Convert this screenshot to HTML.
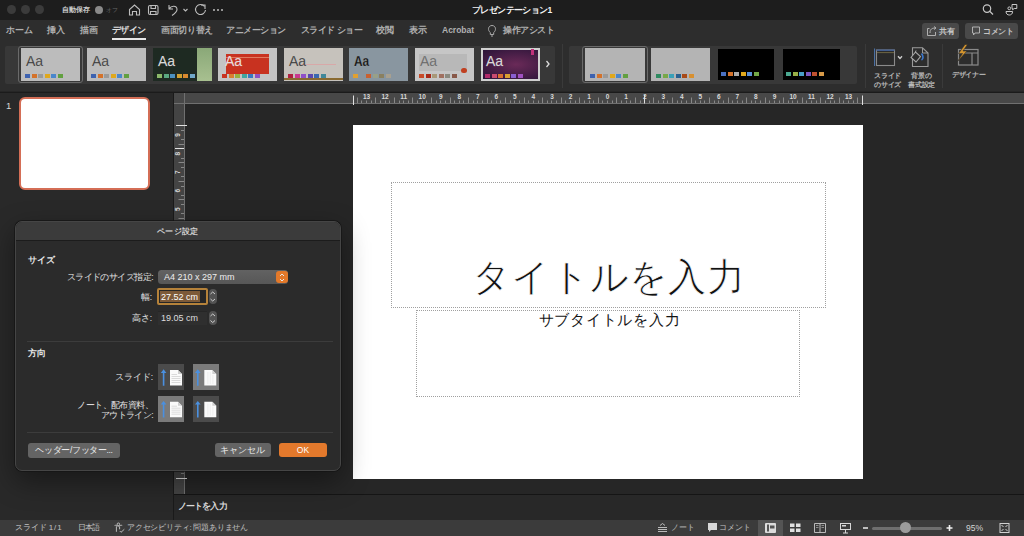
<!DOCTYPE html>
<html><head><meta charset="utf-8">
<style>
*{box-sizing:border-box;margin:0;padding:0}
html,body{width:1024px;height:536px;overflow:hidden;background:#262626;font-family:"Liberation Sans",sans-serif;color:#ddd}
.a{position:absolute}
.t{position:absolute;white-space:nowrap;line-height:1}
svg{position:absolute;overflow:visible}
.light{width:9px;height:9px;border-radius:50%;background:#3b3b3b;top:5px}
.tab{top:26.4px;font-size:8.5px;color:#b0b0b0;font-weight:bold}
.th{top:48px;width:59px;height:33px;overflow:hidden}
.bars{position:absolute;left:4px;top:26px;height:4px;display:flex}
.bars i{display:block;width:5px;height:4px;margin-right:1.5px}
.aa{position:absolute;left:5px;top:6px;font-size:14px;line-height:1;color:#3a3a3a;-webkit-text-stroke:0.25px rgba(190,190,190,.6)}
.rl{font-size:7.5px;color:#cfcfcf}
.dlab{font-size:8.5px;color:#e2e2e2;text-align:right}
.btn{position:absolute;border-radius:3px;background:#666;color:#eee;font-size:8.5px;text-align:center;line-height:14px}
.ori{position:absolute;width:26px;height:26px}
.st{top:524px;font-size:8px;color:#c2c2c2}
</style></head><body>
<!-- title bar -->
<div class="a" style="left:0;top:0;width:1024px;height:20px;background:#1d1d1d"></div>
<div class="a light" style="left:7px"></div>
<div class="a light" style="left:21px"></div>
<div class="a light" style="left:35px"></div>
<div class="t" style="left:62px;top:6px;font-size:7px;color:#cfcfcf;font-weight:bold">自動保存</div>
<div class="a" style="left:95px;top:6px;width:8px;height:8px;border-radius:50%;background:#8a8a8a"></div>
<div class="t" style="left:106px;top:7px;font-size:6px;color:#666">オフ</div>
<svg style="left:0;top:0" width="1024" height="20">
 <g fill="none" stroke="#bdbdbd" stroke-width="1.1">
  <path d="M129.5 15 V9.5 L134.5 5 L139.5 9.5 V15 H136.5 V11.5 H132.5 V15 Z"/>
  <rect x="148.5" y="5.5" width="9.5" height="9" rx="1.5"/>
  <path d="M151 5.5 V8.5 H155.5 V5.5 M150.5 14.5 V11.5 H156 V14.5"/>
  <path d="M169 5 V9 H173 M169.5 8.5 C171 5.5 177 5 177 9.5 C177 12 175 13.5 172 15.5"/>
  <path d="M183.5 9 L185.5 11 L187.5 9"/>
  <path d="M204.5 6.5 A5 5 0 1 0 205.5 10"/>
  <path d="M201 5 H205 V9"/>
 </g>
 <g fill="#bdbdbd"><circle cx="214" cy="10" r="1"/><circle cx="218" cy="10" r="1"/><circle cx="222" cy="10" r="1"/></g>
 <g fill="none" stroke="#c8c8c8" stroke-width="1.2">
  <circle cx="987" cy="8.6" r="3.7"/><path d="M989.7 11.3 L993 14.5"/>
 </g>
 <g fill="none" stroke="#c8c8c8" stroke-width="1">
  <circle cx="1009.3" cy="8.3" r="1.4"/><path d="M1006 11.5 H1012.6 C1012.6 14 1011 15 1009.3 15 C1007.6 15 1006 14 1006 11.5 Z"/>
  <path d="M1012 4.5 H1016.8 V8.5 H1014.2 L1012.6 9.8 V8.5 H1012 Z"/>
 </g>
</svg>
<div class="t" style="left:472px;top:5.5px;font-size:8.5px;color:#f4f4f4;font-weight:bold;letter-spacing:-0.6px">プレゼンテーション1</div>

<!-- tab bar -->
<div class="a" style="left:0;top:20px;width:1024px;height:23px;background:#2d2d2d"></div>
<div class="t tab" style="left:6px;letter-spacing:-0.2px">ホーム</div>
<div class="t tab" style="left:47px">挿入</div>
<div class="t tab" style="left:80px">描画</div>
<div class="t tab" style="left:112px;color:#e0e0e0;letter-spacing:-0.7px">デザイン</div>
<div class="a" style="left:112px;top:38px;width:34px;height:2px;background:#e8e8e8"></div>
<div class="t tab" style="left:161px;letter-spacing:-0.35px">画面切り替え</div>
<div class="t tab" style="left:226px;letter-spacing:-0.5px">アニメーション</div>
<div class="t tab" style="left:301px;letter-spacing:-0.55px">スライド ショー</div>
<div class="t tab" style="left:376px">校閲</div>
<div class="t tab" style="left:409px">表示</div>
<div class="t tab" style="left:442px">Acrobat</div>
<svg style="left:0;top:20px" width="600" height="23"><g fill="none" stroke="#aaa" stroke-width="1"><path d="M490.3 12.5 C487.5 10.5 488 5.5 492 5.5 C496 5.5 496.5 10.5 493.7 12.5 V14.5 H490.3 Z"/><path d="M491 16 H493"/></g></svg>
<div class="t tab" style="left:503px;letter-spacing:-0.45px">操作アシスト</div>
<div class="btn" style="left:922px;top:23px;width:37px;height:16px;background:#494949;line-height:16px;font-size:8.3px;font-weight:bold;color:#c4c4c4;text-align:left;padding-left:17px">共有</div>
<div class="btn" style="left:965px;top:23px;width:53px;height:16px;background:#494949;line-height:16px;font-size:8.3px;font-weight:bold;color:#c4c4c4;text-align:left;padding-left:18px;letter-spacing:-0.4px">コメント</div>
<svg style="left:0;top:0" width="1024" height="43"><g fill="none" stroke="#bbb" stroke-width="0.9">
 <path d="M929.5 28.5 H927.5 V35.5 H935.5 V32"/><path d="M930 33 C930 29 932 28 935.5 28 M934 26.5 L936 28 L934 29.5"/>
 <path d="M972.5 27 H979.5 V33 H975 L973.5 35 V33 H972.5 Z"/>
</g></svg>

<!-- ribbon -->
<div class="a" style="left:0;top:43px;width:1024px;height:48px;background:#2d2d2d"></div>
<div class="a" style="left:0;top:91.5px;width:1024px;height:1.5px;background:#1b1b1b"></div>
<div class="a" style="left:5px;top:46px;width:550px;height:38px;background:#383838;border-radius:2px"></div>
<div class="a" style="left:18px;top:46px;width:65px;height:37px;border:1.5px solid #6a6a6a;border-radius:3px"></div>
<!-- theme thumbs -->
<div class="a th" style="left:21px;background:#bcbcbc"><div class="aa">Aa</div><div class="bars"><i style="background:#3d62b0"></i><i style="background:#d4722a"></i><i style="background:#9a9a9a"></i><i style="background:#e0a81c"></i><i style="background:#4a87cc"></i><i style="background:#62a040"></i></div></div>
<div class="a th" style="left:87px;background:#bcbcbc"><div class="aa">Aa</div><div class="bars"><i style="background:#3d62b0"></i><i style="background:#d4722a"></i><i style="background:#9a9a9a"></i><i style="background:#e0a81c"></i><i style="background:#4a87cc"></i><i style="background:#62a040"></i></div></div>
<div class="a th" style="left:153px;background:#1e2a22"><div class="a" style="right:0;top:0;width:15px;height:33px;background:linear-gradient(#8aa878,#a8c090)"></div><div class="aa" style="color:#ddd">Aa</div><div class="bars"><i style="background:#8bb86a"></i><i style="background:#5aa880"></i><i style="background:#4a90c0"></i><i style="background:#d0a030"></i><i style="background:#d88a30"></i><i style="background:#70a8c8"></i></div></div>
<div class="a th" style="left:218px;background:#c4c4c4"><div class="a" style="left:8px;top:6px;width:43px;height:20px;background:#c83220"></div><div class="a" style="left:8px;top:9px;width:43px;height:1px;background:#e07a60"></div><div class="aa" style="color:#f0e0e0;left:7px">Aa</div><div class="bars"><i style="background:#c83220"></i><i style="background:#d88030"></i><i style="background:#98b040"></i><i style="background:#40a8a0"></i><i style="background:#3a78c0"></i><i style="background:#9050c0"></i></div></div>
<div class="a th" style="left:284px;background:#c6c2bc"><div class="a" style="left:16px;top:16px;width:36px;height:1px;background:#d8a8a8"></div><div class="a" style="left:0;top:30px;width:59px;height:2px;background:#8a6a30"></div><div class="aa">Aa</div><div class="bars" style="top:26px"><i style="background:#b02040"></i><i style="background:#c83a90"></i><i style="background:#9050c8"></i><i style="background:#5a48b0"></i><i style="background:#3a68b0"></i><i style="background:#40889a"></i></div></div>
<div class="a th" style="left:349px;background:#8996a0"><div class="aa" style="color:#1a1a1a;font-weight:bold;transform:scaleX(.85);transform-origin:left">Aa</div><div class="bars"><i style="background:#e0a030"></i><i style="background:transparent"></i><i style="background:#c86030"></i><i style="background:#98a088"></i><i style="background:#8a8060"></i><i style="background:#a8a090"></i></div></div>
<div class="a th" style="left:415px;background:#c6c6c6"><div class="a" style="left:4px;top:6px;width:48px;height:17px;background:#b8b8b8"></div><div class="a" style="left:46px;top:19.5px;width:5.5px;height:5.5px;border-radius:50%;background:#c04020"></div><div class="aa" style="color:#666">Aa</div><div class="bars"><i style="background:#c84a28"></i><i style="background:#a82818"></i><i style="background:#a89878"></i><i style="background:#a07060"></i><i style="background:#8a8a80"></i><i style="background:#885848"></i></div></div>
<div class="a th" style="left:481px;background:#d0d0d0;padding:2px"><div style="width:55px;height:29px;background:radial-gradient(ellipse at 60% 50%,#6a2a58,#2a1438)"></div><div class="a" style="left:50px;top:1px;width:3px;height:6px;background:#c0307a"></div><div class="aa" style="color:#ddd">Aa</div><div class="bars"><i style="background:#b02a6a"></i><i style="background:#c84a70"></i><i style="background:#d87030"></i><i style="background:#d8a030"></i><i style="background:#8a60d0"></i><i style="background:#a050c0"></i></div></div>
<svg style="left:0;top:0" width="1024" height="96"><path d="M546.5 61 L549 64 L546.5 67" fill="none" stroke="#ddd" stroke-width="1.3"/></svg>
<div class="a" style="left:562px;top:44px;width:1px;height:44px;background:#3a3a3a"></div>
<!-- variants -->
<div class="a" style="left:569px;top:46px;width:288px;height:38px;background:#383838;border-radius:2px"></div>
<div class="a" style="left:582px;top:46px;width:66px;height:37px;border:1.5px solid #6a6a6a;border-radius:3px"></div>
<div class="a th" style="left:585px;width:60px;background:#b4b4b4"><div class="bars" style="left:5px;top:26px"><i style="background:#3d62b0"></i><i style="background:#d4722a"></i><i style="background:#9a9a9a"></i><i style="background:#e0a81c"></i><i style="background:#4a87cc"></i><i style="background:#62a040"></i></div></div>
<div class="a th" style="left:651px;background:#b4b4b4"><div class="bars" style="left:5px;top:26px"><i style="background:#2e8a60"></i><i style="background:#78a848"></i><i style="background:#3aa0b8"></i><i style="background:#2a6090"></i><i style="background:#a84a18"></i><i style="background:#d89030"></i></div></div>
<div class="a th" style="left:718px;top:49px;width:56px;height:31px;background:#000"><div class="bars" style="left:3px;top:23px"><i style="background:#4a70c0"></i><i style="background:#d4722a"></i><i style="background:#aaa"></i><i style="background:#e0a81c"></i><i style="background:#5a90d8"></i><i style="background:#72a848"></i></div></div>
<div class="a th" style="left:783px;top:49px;width:57px;height:31px;background:#000"><div class="bars" style="left:3px;top:23px"><i style="background:#4aa890"></i><i style="background:#98b048"></i><i style="background:#48a0c8"></i><i style="background:#7a58c0"></i><i style="background:#c05030"></i><i style="background:#d89a48"></i></div></div>
<div class="a" style="left:865px;top:44px;width:1px;height:44px;background:#3a3a3a"></div>
<div class="a" style="left:942px;top:44px;width:1px;height:44px;background:#3a3a3a"></div>
<svg style="left:0;top:0" width="1024" height="96"><g fill="none" stroke-width="1">
 <rect x="876.5" y="50" width="18" height="15.5" stroke="#8a8a8a" stroke-width="1.1" fill="#2a2a2a"/>
 <path d="M876.5 50.2 H894.5" stroke="#3f5f98" stroke-width="1.3"/><path d="M877 52.6 H894" stroke="#8a8050" stroke-width="0.7"/>
 <path d="M874.6 48.5 V66" stroke="#4f78b0" stroke-width="1"/>
 <path d="M898 56.3 L900 58.5 L902 56.3" stroke="#d0d0d0" stroke-width="1.3"/>
 <path d="M912.5 47.8 H922.5 L928 53 V66.5 H912.5 Z" stroke="#9a9a9a" stroke-width="1.1"/><path d="M922.5 48 V53 H928" stroke="#9a9a9a" stroke-width="1"/>
 <path d="M911 57.5 L915.5 52 L920.5 56.5 L916 62 Z" stroke="#a8a8a8" stroke-width="1.1" fill="#2c2c2c"/><path d="M915.5 52 L916 50.5" stroke="#a8a8a8"/>
 <path d="M921.5 53.5 C923.5 56 923.5 59 921.5 60" stroke="#3a78d0" stroke-width="1.6"/>
 <rect x="958.5" y="49.5" width="19.5" height="15.5" stroke="#8a8a8a" stroke-width="1.2"/><path d="M958.5 53 H978 M972 53 V65" stroke="#8a8a8a" stroke-width="1.2"/>
 <path d="M965 44.5 L958.5 53.5 H962.5 L957.5 61.5 L967 51 H963 L967.5 44.5 Z" fill="#d6962e" stroke="#2c2c2c" stroke-width="0.6"/>
</g></svg>
<div class="t" style="left:874px;top:71px;font-size:7.2px;color:#b8b8b8;line-height:9px;font-weight:bold;letter-spacing:-0.2px">スライド<br>のサイズ</div>
<div class="t" style="left:908px;top:71px;font-size:7.2px;color:#b8b8b8;line-height:9px;text-align:center;font-weight:bold;letter-spacing:-0.2px">背景の<br>書式設定</div>
<div class="t" style="left:952px;top:71px;font-size:7.2px;color:#b8b8b8;font-weight:bold;letter-spacing:-0.3px">デザイナー</div>

<!-- left panel -->
<div class="a" style="left:0;top:93px;width:173px;height:427px;background:#292929"></div>
<div class="a" style="left:173px;top:93px;width:1px;height:427px;background:#1a1a1a"></div>
<div class="t" style="left:6px;top:101px;font-size:9.5px;color:#d8d8d8">1</div>
<div class="a" style="left:18.5px;top:97px;width:131px;height:92.5px;border:2.5px solid #d46e56;border-radius:6px;background:#fff"></div>

<!-- editor -->
<div class="a" style="left:174px;top:93px;width:850px;height:402px;background:#262626"></div>
<div class="a" style="left:174px;top:93px;width:850px;height:11px;background:#484848"></div>
<div class="a" style="left:174px;top:104px;width:10px;height:390px;background:#444"></div>
<div class="a" style="left:174px;top:103px;width:850px;height:1px;background:#707070"></div>
<div class="a" style="left:184px;top:93px;width:1px;height:401px;background:#707070"></div>
<svg style="left:0;top:0" width="1024" height="536">
<g stroke="#888" stroke-width="1">
<path d="M357.5 97.5 V103"/>
<path d="M361.5 100.5 V103"/>
<path d="M366.5 100.5 V103"/>
<path d="M371.5 100.5 V103"/>
<path d="M375.5 97.5 V103"/>
<path d="M380.5 100.5 V103"/>
<path d="M385.5 100.5 V103"/>
<path d="M389.5 100.5 V103"/>
<path d="M394.5 97.5 V103"/>
<path d="M399.5 100.5 V103"/>
<path d="M403.5 100.5 V103"/>
<path d="M408.5 100.5 V103"/>
<path d="M412.5 97.5 V103"/>
<path d="M417.5 100.5 V103"/>
<path d="M422.5 100.5 V103"/>
<path d="M426.5 100.5 V103"/>
<path d="M431.5 97.5 V103"/>
<path d="M436.5 100.5 V103"/>
<path d="M440.5 100.5 V103"/>
<path d="M445.5 100.5 V103"/>
<path d="M450.5 97.5 V103"/>
<path d="M454.5 100.5 V103"/>
<path d="M459.5 100.5 V103"/>
<path d="M463.5 100.5 V103"/>
<path d="M468.5 97.5 V103"/>
<path d="M473.5 100.5 V103"/>
<path d="M477.5 100.5 V103"/>
<path d="M482.5 100.5 V103"/>
<path d="M487.5 97.5 V103"/>
<path d="M491.5 100.5 V103"/>
<path d="M496.5 100.5 V103"/>
<path d="M500.5 100.5 V103"/>
<path d="M505.5 97.5 V103"/>
<path d="M510.5 100.5 V103"/>
<path d="M514.5 100.5 V103"/>
<path d="M519.5 100.5 V103"/>
<path d="M524.5 97.5 V103"/>
<path d="M528.5 100.5 V103"/>
<path d="M533.5 100.5 V103"/>
<path d="M538.5 100.5 V103"/>
<path d="M542.5 97.5 V103"/>
<path d="M547.5 100.5 V103"/>
<path d="M551.5 100.5 V103"/>
<path d="M556.5 100.5 V103"/>
<path d="M561.5 97.5 V103"/>
<path d="M565.5 100.5 V103"/>
<path d="M570.5 100.5 V103"/>
<path d="M575.5 100.5 V103"/>
<path d="M579.5 97.5 V103"/>
<path d="M584.5 100.5 V103"/>
<path d="M589.5 100.5 V103"/>
<path d="M593.5 100.5 V103"/>
<path d="M598.5 97.5 V103"/>
<path d="M602.5 100.5 V103"/>
<path d="M607.5 100.5 V103"/>
<path d="M612.5 100.5 V103"/>
<path d="M616.5 97.5 V103"/>
<path d="M621.5 100.5 V103"/>
<path d="M626.5 100.5 V103"/>
<path d="M630.5 100.5 V103"/>
<path d="M635.5 97.5 V103"/>
<path d="M640.5 100.5 V103"/>
<path d="M644.5 100.5 V103"/>
<path d="M649.5 100.5 V103"/>
<path d="M653.5 97.5 V103"/>
<path d="M658.5 100.5 V103"/>
<path d="M663.5 100.5 V103"/>
<path d="M667.5 100.5 V103"/>
<path d="M672.5 97.5 V103"/>
<path d="M677.5 100.5 V103"/>
<path d="M681.5 100.5 V103"/>
<path d="M686.5 100.5 V103"/>
<path d="M691.5 97.5 V103"/>
<path d="M695.5 100.5 V103"/>
<path d="M700.5 100.5 V103"/>
<path d="M704.5 100.5 V103"/>
<path d="M709.5 97.5 V103"/>
<path d="M714.5 100.5 V103"/>
<path d="M718.5 100.5 V103"/>
<path d="M723.5 100.5 V103"/>
<path d="M728.5 97.5 V103"/>
<path d="M732.5 100.5 V103"/>
<path d="M737.5 100.5 V103"/>
<path d="M742.5 100.5 V103"/>
<path d="M746.5 97.5 V103"/>
<path d="M751.5 100.5 V103"/>
<path d="M755.5 100.5 V103"/>
<path d="M760.5 100.5 V103"/>
<path d="M765.5 97.5 V103"/>
<path d="M769.5 100.5 V103"/>
<path d="M774.5 100.5 V103"/>
<path d="M779.5 100.5 V103"/>
<path d="M783.5 97.5 V103"/>
<path d="M788.5 100.5 V103"/>
<path d="M792.5 100.5 V103"/>
<path d="M797.5 100.5 V103"/>
<path d="M802.5 97.5 V103"/>
<path d="M806.5 100.5 V103"/>
<path d="M811.5 100.5 V103"/>
<path d="M816.5 100.5 V103"/>
<path d="M820.5 97.5 V103"/>
<path d="M825.5 100.5 V103"/>
<path d="M830.5 100.5 V103"/>
<path d="M834.5 100.5 V103"/>
<path d="M839.5 97.5 V103"/>
<path d="M843.5 100.5 V103"/>
<path d="M848.5 100.5 V103"/>
<path d="M853.5 100.5 V103"/>
<path d="M857.5 97.5 V103"/>
<path d="M862.5 100.5 V103"/>
</g>
<g fill="#d8d8d8" font-size="6.5" font-family="Liberation Sans" text-anchor="middle" font-weight="bold">
<text x="366.6" y="98.8">13</text>
<text x="385.1" y="98.8">12</text>
<text x="403.7" y="98.8">11</text>
<text x="422.2" y="98.8">10</text>
<text x="440.7" y="98.8">9</text>
<text x="459.3" y="98.8">8</text>
<text x="477.8" y="98.8">7</text>
<text x="496.4" y="98.8">6</text>
<text x="514.9" y="98.8">5</text>
<text x="533.4" y="98.8">4</text>
<text x="552.0" y="98.8">3</text>
<text x="570.5" y="98.8">2</text>
<text x="589.1" y="98.8">1</text>
<text x="607.6" y="98.8">0</text>
<text x="626.1" y="98.8">1</text>
<text x="644.7" y="98.8">2</text>
<text x="663.2" y="98.8">3</text>
<text x="681.8" y="98.8">4</text>
<text x="700.3" y="98.8">5</text>
<text x="718.8" y="98.8">6</text>
<text x="737.4" y="98.8">7</text>
<text x="755.9" y="98.8">8</text>
<text x="774.5" y="98.8">9</text>
<text x="793.0" y="98.8">10</text>
<text x="811.5" y="98.8">11</text>
<text x="830.1" y="98.8">12</text>
<text x="848.6" y="98.8">13</text>
</g>
<g stroke="#888" stroke-width="1">
<path d="M178.5 125.5 H184"/>
<path d="M181 130.5 H184"/>
<path d="M181 139.5 H184"/>
<path d="M178.5 144.5 H184"/>
<path d="M181 148.5 H184"/>
<path d="M181 158.5 H184"/>
<path d="M178.5 162.5 H184"/>
<path d="M181 167.5 H184"/>
<path d="M181 176.5 H184"/>
<path d="M178.5 181.5 H184"/>
<path d="M181 186.5 H184"/>
<path d="M181 195.5 H184"/>
<path d="M178.5 199.5 H184"/>
<path d="M181 204.5 H184"/>
<path d="M181 213.5 H184"/>
<path d="M178.5 218.5 H184"/>
<path d="M181 223.5 H184"/>
<path d="M181 232.5 H184"/>
<path d="M178.5 237.5 H184"/>
<path d="M181 241.5 H184"/>
<path d="M181 250.5 H184"/>
<path d="M178.5 255.5 H184"/>
<path d="M181 260.5 H184"/>
<path d="M181 269.5 H184"/>
<path d="M178.5 274.5 H184"/>
<path d="M181 278.5 H184"/>
<path d="M181 288.5 H184"/>
<path d="M178.5 292.5 H184"/>
<path d="M181 297.5 H184"/>
<path d="M181 306.5 H184"/>
<path d="M178.5 311.5 H184"/>
<path d="M181 315.5 H184"/>
<path d="M181 325.5 H184"/>
<path d="M178.5 329.5 H184"/>
<path d="M181 334.5 H184"/>
<path d="M181 343.5 H184"/>
<path d="M178.5 348.5 H184"/>
<path d="M181 353.5 H184"/>
<path d="M181 362.5 H184"/>
<path d="M178.5 366.5 H184"/>
<path d="M181 371.5 H184"/>
<path d="M181 380.5 H184"/>
<path d="M178.5 385.5 H184"/>
<path d="M181 390.5 H184"/>
<path d="M181 399.5 H184"/>
<path d="M178.5 404.5 H184"/>
<path d="M181 408.5 H184"/>
<path d="M181 417.5 H184"/>
<path d="M178.5 422.5 H184"/>
<path d="M181 427.5 H184"/>
<path d="M181 436.5 H184"/>
<path d="M178.5 441.5 H184"/>
<path d="M181 445.5 H184"/>
<path d="M181 455.5 H184"/>
<path d="M178.5 459.5 H184"/>
<path d="M181 464.5 H184"/>
<path d="M181 473.5 H184"/>
</g>
<g fill="#d8d8d8" font-size="6.5" font-family="Liberation Sans" text-anchor="middle" font-weight="bold">
<text x="0" y="0" transform="translate(177.8 135.0) rotate(-90)" dy="2.3">9</text>
<text x="0" y="0" transform="translate(177.8 153.6) rotate(-90)" dy="2.3">8</text>
<text x="0" y="0" transform="translate(177.8 172.2) rotate(-90)" dy="2.3">7</text>
<text x="0" y="0" transform="translate(177.8 190.7) rotate(-90)" dy="2.3">6</text>
<text x="0" y="0" transform="translate(177.8 209.2) rotate(-90)" dy="2.3">5</text>
<text x="0" y="0" transform="translate(177.8 227.8) rotate(-90)" dy="2.3">4</text>
<text x="0" y="0" transform="translate(177.8 246.3) rotate(-90)" dy="2.3">3</text>
<text x="0" y="0" transform="translate(177.8 264.9) rotate(-90)" dy="2.3">2</text>
<text x="0" y="0" transform="translate(177.8 283.4) rotate(-90)" dy="2.3">1</text>
<text x="0" y="0" transform="translate(177.8 302.0) rotate(-90)" dy="2.3">0</text>
<text x="0" y="0" transform="translate(177.8 320.6) rotate(-90)" dy="2.3">1</text>
<text x="0" y="0" transform="translate(177.8 339.1) rotate(-90)" dy="2.3">2</text>
<text x="0" y="0" transform="translate(177.8 357.6) rotate(-90)" dy="2.3">3</text>
<text x="0" y="0" transform="translate(177.8 376.2) rotate(-90)" dy="2.3">4</text>
<text x="0" y="0" transform="translate(177.8 394.8) rotate(-90)" dy="2.3">5</text>
<text x="0" y="0" transform="translate(177.8 413.3) rotate(-90)" dy="2.3">6</text>
<text x="0" y="0" transform="translate(177.8 431.9) rotate(-90)" dy="2.3">7</text>
<text x="0" y="0" transform="translate(177.8 450.4) rotate(-90)" dy="2.3">8</text>
<text x="0" y="0" transform="translate(177.8 469.0) rotate(-90)" dy="2.3">9</text>
</g>
<g stroke="#e0e0e0" stroke-width="1"><path d="M353.5 95.5 V105"/><path d="M862.5 95.5 V105"/><path d="M644.5 95 V103.5"/><path d="M176 125.5 H187"/><path d="M176 478.5 H187"/><path d="M175 148.5 H184"/></g>
</svg>
<div class="a" style="left:353px;top:125px;width:510px;height:354px;background:#fff"></div>
<div class="a" style="left:391px;top:182px;width:435px;height:125.5px;border:1px dotted #a0a0a0"></div>
<div class="t" style="left:472px;top:257.5px;font-size:38.4px;letter-spacing:0.3px;color:#111;-webkit-text-stroke:0.7px #fff">タイトルを入力</div>
<div class="a" style="left:416px;top:309.5px;width:384px;height:87.5px;border:1px dotted #a0a0a0"></div>
<div class="t" style="left:538.5px;top:311.5px;font-size:15.4px;letter-spacing:0.8px;color:#151515">サブタイトルを入力</div>

<!-- notes -->
<div class="a" style="left:174px;top:494px;width:850px;height:1px;background:#151515"></div>
<div class="a" style="left:174px;top:495px;width:850px;height:25px;background:#282828"></div>
<div class="t" style="left:178px;top:501.5px;font-size:8.5px;color:#ddd;font-weight:bold;letter-spacing:-0.9px">ノートを入力</div>

<!-- status bar -->
<div class="a" style="left:0;top:520px;width:1024px;height:16px;background:#3b3b3b"></div>
<div class="t st" style="left:15px;letter-spacing:-0.1px">スライド <span style="letter-spacing:0.9px">1/1</span></div>
<div class="t st" style="left:77.5px;letter-spacing:-0.7px">日本語</div>
<div class="t st" style="left:127px;letter-spacing:-0.2px">アクセシビリティ: 問題ありません</div>
<div class="t st" style="left:671px">ノート</div>
<div class="t st" style="left:719px">コメント</div>
<div class="a" style="left:758px;top:520px;width:25px;height:16px;background:#545454"></div>
<div class="t st" style="left:966px;font-size:8.5px;top:523.5px;color:#d4d4d4">95%</div>
<div class="a" style="left:872px;top:526.5px;width:70px;height:3px;border-radius:1.5px;background:#6e6e6e"></div>
<div class="a" style="left:899.5px;top:522px;width:11px;height:11px;border-radius:50%;background:#9c9c9c"></div>
<svg style="left:0;top:0" width="1024" height="536">
 <g fill="none" stroke="#c8c8c8" stroke-width="0.9">
  <path d="M658 527.5 H667 M658 529.5 H667 M658 531.5 H667"/><path d="M660 525.5 L662.5 523.5 L665 525.5"/>
  <circle cx="118.4" cy="524.3" r="1.3"/><path d="M114.6 525.5 C115.8 524.8 116.8 526 118.4 526.2 C120 526 121 524.8 122.2 525.5 M116.4 526.3 V531.8 M119.6 526.5 V529.3 M119.8 531 L121 532.3 L124.3 529.3"/>
 </g>
 <path d="M708 523 H717 V530 H711 L709 532 V530 H708 Z" fill="#d8d8d8"/>
 <g fill="#dcdcdc"><rect x="765" y="523" width="11" height="10" rx="1"/></g>
 <rect x="767" y="524.5" width="2" height="7" fill="#545454"/><rect x="770" y="525.5" width="4.5" height="3" fill="#545454"/>
 <g fill="#e0e0e0"><rect x="790" y="523.5" width="4.5" height="3.5"/><rect x="796" y="523.5" width="4.5" height="3.5"/><rect x="790" y="528.5" width="4.5" height="3.5"/><rect x="796" y="528.5" width="4.5" height="3.5"/></g>
 <g fill="none" stroke="#c8c8c8" stroke-width="0.9"><path d="M814.5 523.5 H825.5 V532.5 H814.5 Z M820 523.5 V532.5"/><path d="M816 525.5 H818.5 M816 527.5 H818.5 M821.5 525.5 H824 M821.5 527.5 H824" stroke-width="0.6"/></g>
 <g fill="none" stroke="#d8d8d8" stroke-width="1"><rect x="840.5" y="523.5" width="10" height="6"/><path d="M845.5 529.5 V533 M843 533 H848"/></g>
 <rect x="842" y="525" width="4" height="1.5" fill="#d8d8d8"/>
 <path d="M863 528 H868" stroke="#e0e0e0" stroke-width="1.6"/>
 <path d="M946.5 528 H952.5 M949.5 525 V531" stroke="#f0f0f0" stroke-width="1.6"/>
 <g fill="none" stroke="#d0d0d0" stroke-width="1"><rect x="1000" y="523.5" width="9" height="9"/><path d="M1001.5 525 L1003.5 527 M1007.5 525 L1005.5 527 M1001.5 531 L1003.5 529 M1007.5 531 L1005.5 529"/></g>
</svg>

<!-- dialog -->
<div class="a" style="left:14.5px;top:220.5px;width:326.5px;height:250.5px;border-radius:7px;background:#2b2b2b;border:1px solid #454545;box-shadow:0 0 0 0.7px #151515,0 10px 28px rgba(0,0,0,.42)"></div>
<div class="a" style="left:15.5px;top:221.5px;width:324.5px;height:19px;border-radius:6px 6px 0 0;background:#3b3b3b;border-bottom:1px solid #1c1c1c"></div>
<div class="t" style="left:157px;top:227px;font-size:8.3px;color:#cfcfcf;font-weight:bold;letter-spacing:0.3px">ページ設定</div>
<div class="t" style="left:28px;top:256px;font-size:8.5px;color:#e8e8e8;font-weight:bold">サイズ</div>
<div class="t dlab" style="left:40px;width:113px;top:273px;letter-spacing:-0.55px">スライドのサイズ指定:</div>
<div class="a" style="left:158px;top:270px;width:130px;height:14px;border-radius:3.5px;background:linear-gradient(#626262,#575757)"></div>
<div class="t" style="left:164px;top:272.5px;font-size:9px;color:#eee">A4 210 x 297 mm</div>
<div class="a" style="left:276px;top:271px;width:11.5px;height:12px;border-radius:3px;background:#e3792a"></div>
<div class="t dlab" style="left:100px;width:52px;top:293px">幅:</div>
<div class="a" style="left:157px;top:288px;width:51px;height:17px;border:2px solid #b5823a;border-radius:2px;background:#262626"></div>
<div class="a" style="left:160px;top:291px;width:39.5px;height:11px;background:#7d5a38"></div>
<div class="t" style="left:161px;top:292.5px;font-size:9px;color:#fff">27.52 cm</div>
<div class="t dlab" style="left:100px;width:52px;top:314px">高さ:</div>
<div class="a" style="left:158px;top:311px;width:49px;height:14px;background:#2f2f2f;border-top:1px solid #262626"></div>
<div class="t" style="left:161px;top:313.5px;font-size:9px;color:#ddd">19.05 cm</div>
<div class="a" style="left:208.5px;top:289px;width:8.5px;height:15px;border-radius:4px;background:#535353"></div>
<div class="a" style="left:208.5px;top:311px;width:8.5px;height:14px;border-radius:4px;background:#535353"></div>
<svg style="left:0;top:0" width="1024" height="536"><g fill="none" stroke="#e8e8e8" stroke-width="1">
 <path d="M280 276 L282 274 L284 276 M280 279 L282 281 L284 279"/>
 <path d="M210.5 294 L212.7 292 L215 294 M210.5 299 L212.7 301 L215 299" stroke="#d0d0d0"/>
 <path d="M210.5 316 L212.7 314 L215 316 M210.5 320.5 L212.7 322.5 L215 320.5" stroke="#d0d0d0"/>
</g></svg>
<div class="a" style="left:27px;top:341px;width:306px;height:1px;background:#3c3c3c"></div>
<div class="t" style="left:28px;top:349px;font-size:8.5px;color:#e8e8e8;font-weight:bold">方向</div>
<div class="t dlab" style="left:60px;width:93px;top:373px">スライド:</div>
<div class="t dlab" style="left:50px;width:103px;top:400px;line-height:10px;letter-spacing:-0.6px">ノート、配布資料、<br>アウトライン:</div>
<div class="ori" style="left:158px;top:364px;background:#4b4b4b"></div>
<div class="ori" style="left:192.5px;top:364px;background:#7b7b7b"></div>
<div class="ori" style="left:158px;top:396px;background:#7b7b7b"></div>
<div class="ori" style="left:192.5px;top:396px;background:#4b4b4b"></div>
<svg style="left:0;top:0" width="1024" height="536">
 <defs>
  <g id="arr"><path d="M0 0 L2.8 3.6 H0.8 V16.5 H-0.8 V3.6 H-2.8 Z" fill="#4a90e0"/></g>
  <g id="docl"><path d="M0 0 H8 L12 4 V15.5 H0 Z" fill="#fafafa"/><path d="M8 0 V4 H12" fill="#cfcfcf"/><path d="M1.5 6.5 H10.5 M1.5 8.5 H10.5 M1.5 10.5 H10.5 M1.5 12.5 H10.5 M1.5 4.5 H7" stroke="#bbb" stroke-width="0.5"/></g>
  <g id="docp"><path d="M0 0 H8 L12 4 V15.5 H0 Z" fill="#fafafa"/><path d="M8 0 V4 H12" fill="#cfcfcf"/><path d="M3.5 2 V14 M6 2 V14 M8.5 5 V14" stroke="#e2e2e2" stroke-width="0.5"/></g>
 </defs>
 <use href="#arr" x="163.6" y="369.3"/><use href="#docl" x="170" y="370"/>
 <use href="#arr" x="197.8" y="369.3"/><use href="#docp" x="204.3" y="370"/>
 <use href="#arr" x="163.6" y="401"/><use href="#docl" x="170" y="401.7"/>
 <use href="#arr" x="197.8" y="401"/><use href="#docp" x="204.3" y="401.7"/>
</svg>
<div class="a" style="left:27px;top:432px;width:306px;height:1px;background:#3c3c3c"></div>
<div class="btn" style="left:28px;top:443px;width:92px;height:14.5px;background:#646464;letter-spacing:-0.35px">ヘッダー/フッター...</div>
<div class="btn" style="left:214.5px;top:443px;width:56.5px;height:14px;background:#646464">キャンセル</div>
<div class="btn" style="left:279px;top:443px;width:48px;height:14px;background:#e3792c;color:#fff">OK</div>
</body></html>
